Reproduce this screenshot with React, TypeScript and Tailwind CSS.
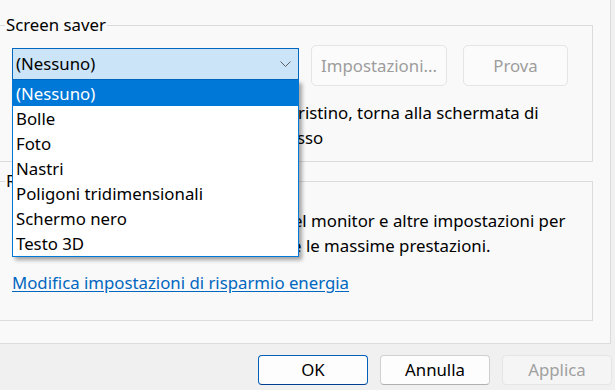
import { useState } from 'react';

const options = [
  '(Nessuno)',
  'Bolle',
  'Foto',
  'Nastri',
  'Poligoni tridimensionali',
  'Schermo nero',
  'Testo 3D',
];

function Chevron() {
  return (
    <svg width="11" height="6" viewBox="0 0 11 6" fill="none" className="shrink-0">
      <path d="M0.5 0.5 L5.5 5.5 L10.5 0.5" stroke="#5c5c5c" strokeWidth="1" />
    </svg>
  );
}

export default function App() {
  const [selected] = useState(0);

  return (
    <div className="w-[615px] h-[390px] overflow-hidden bg-[#f0f0f0] font-['Noto_Sans',sans-serif] text-[16.8px] text-black">
      {/* Pannello impostazioni */}
      <div className="w-[611px] h-[344px] bg-[#f9f9f9] border-r border-b border-[#dcdcdc] pt-[14px]">
        {/* Screen saver */}
        <fieldset className="ml-[-8px] w-[601px] h-[148px] border border-[#dcdcdc] pl-[19px] pr-0 pb-0">
          <legend className="ml-[-7px] px-[1px] leading-[22px]">Screen saver</legend>

          <div className="mt-[9px] flex items-start">
            <div className="relative mt-[3px] w-[287px] h-[32px]">
              <div className="w-full h-full flex items-center justify-between bg-[#cce4f7] border border-[#0067c0] pl-[3px] pr-[7px]">
                <span className="leading-[22px]">{options[selected]}</span>
                <Chevron />
              </div>

              {/* Elenco aperto */}
              <div className="absolute left-0 top-full z-10 w-[287px] bg-white border border-[#0078d7] shadow-[3px_3px_4px_rgba(0,0,0,0.35)]">
                {options.map((o, i) => (
                  <div
                    key={o}
                    className={`h-[25px] pl-[3px] leading-[25px] ${i === selected ? 'bg-[#0078d7] text-white' : ''}`}
                  >
                    {o}
                  </div>
                ))}
              </div>
            </div>

            <button className="ml-[12px] w-[136px] h-[41px] rounded-[5px] border border-[#e5e5e5] bg-[#fbfbfb] text-[#9d9d9d]">
              Impostazioni...
            </button>
            <button className="ml-[16px] w-[105px] h-[41px] rounded-[5px] border border-[#e5e5e5] bg-[#fbfbfb] text-[#9d9d9d]">
              Prova
            </button>
          </div>

          <div className="mt-[14px] flex items-start leading-[25px]">
            <div className="w-[245px] flex items-center gap-2">
              <span>Attesa:</span>
              <span className="w-[50px] h-[24px] border border-[#c8c8c8] bg-white text-right pr-1 leading-[22px]">1</span>
              <span>minuti</span>
              <span className="ml-2 w-[15px] h-[15px] border border-[#777] rounded-[3px] bg-white" />
            </div>
            <p className="pl-[5px] indent-[-5px]">
              Al ripristino, torna alla schermata di
              <br />
              accesso
            </p>
          </div>
        </fieldset>

        {/* Risparmio energia */}
        <fieldset className="mt-[8px] ml-[-8px] w-[601px] h-[151px] border border-[#dcdcdc] pl-[19px] pr-0 pb-0">
          <legend className="ml-[-7px] px-[1px] leading-[22px]">Risparmio energia</legend>

          <p className="mt-[16px] leading-[25px]">
            È possibile cambiare la luminosità del monitor e altre impostazioni per
            <br />
            risparmiare energia oppure ottenere le massime prestazioni.
          </p>
          <a href="#" className="mt-[12px] inline-block leading-[25px] text-[#0067c0] underline underline-offset-2">
            Modifica impostazioni di risparmio energia
          </a>
        </fieldset>
      </div>

      {/* Pulsanti */}
      <div className="mt-[11px] pr-[3px] flex justify-end gap-[12px]">
        <button className="w-[110px] h-[30px] rounded-[4px] border border-[#005fb8] border-b-[#003e92] bg-[#fdfdfd]">
          OK
        </button>
        <button className="w-[110px] h-[30px] rounded-[4px] border border-[#d0d0d0] border-b-[#b0b0b0] bg-[#fdfdfd]">
          Annulla
        </button>
        <button className="w-[110px] h-[30px] rounded-[4px] border border-[#e5e5e5] bg-[#f5f5f5] text-[#a0a0a0]">
          Applica
        </button>
      </div>
    </div>
  );
}
